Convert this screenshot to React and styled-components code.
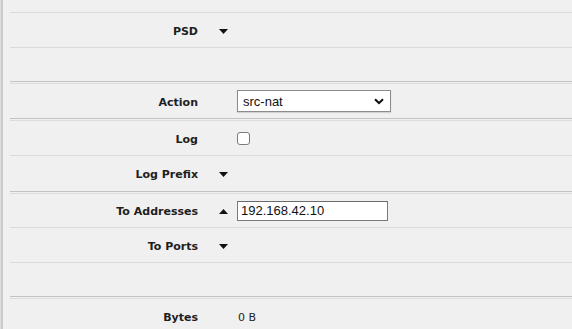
import React from "react";
import styled, { createGlobalStyle } from "styled-components";

// # Style # //
const GlobalStyle = createGlobalStyle`
  html, body {
    margin: 0;
    padding: 0;
    background: #f0f0f0;
    overflow: hidden;
  }
`;

const Page = styled.div`
  display: flex;
  width: 572px;
  height: 329px;
  overflow: hidden;
  background: #f0f0f0;
`;

const Rail = styled.div`
  flex: 0 0 3px;
  background: linear-gradient(to right, #dedede 0 1px, #cbcbcb 1px 3px);
`;

const Content = styled.div`
  flex: 1;
  padding-left: 7px;
  margin-top: -22px;
`;

const Section = styled.div`
  border-bottom: 1px solid #c3c3c3;

  & + & {
    margin-top: 1px;
    border-top: 1px solid #dcdcdc;
  }
`;

const Row = styled.div`
  display: grid;
  grid-template-columns: 188px 39px 1fr;
  align-items: center;
  height: ${p => p.h || 34}px;
  padding-top: 2px;
  box-sizing: border-box;
  font-family: "DejaVu Sans", Verdana, sans-serif;
  font-size: 11px;
  color: #222;

  &:not(:last-child) {
    border-bottom: 1px solid #dadada;
    height: ${p => (p.h || 34) + 1}px;
  }
`;

const Label = styled.div`
  text-align: right;
  font-weight: bold;
  color: ${p => (p.faint ? "#fafafa" : "#1e1e1e")};
`;

const Toggle = styled.div`
  padding-left: 21px;
  display: flex;
  align-items: center;
`;

const Value = styled.div`
  padding-left: 1px;
`;

const SelectBox = styled.div`
  position: relative;
  width: 154px;
  height: 22px;
  margin-top: -2px;
`;

const Select = styled.select`
  appearance: none;
  width: 100%;
  height: 100%;
  box-sizing: border-box;
  border: 1px solid #8c8c8c;
  border-radius: 0;
  background: #fff;
  box-shadow: 0 1px 1px rgba(0, 0, 0, 0.12);
  padding: 0 0 0 5px;
  font-family: "Liberation Sans", Arial, sans-serif;
  font-size: 13px;
  color: #111;
  outline: none;
`;

const Chevron = styled.svg`
  position: absolute;
  right: 7px;
  top: 8px;
  pointer-events: none;
`;

const TextInput = styled.input`
  width: 151px;
  height: 20px;
  box-sizing: border-box;
  border: 1px solid #7a7a7a;
  border-top-color: #6a6a6a;
  background: #fff;
  padding: 0 0 0 3px;
  margin-top: -2px;
  font-family: "Liberation Sans", Arial, sans-serif;
  font-size: 13px;
  color: #111;
  outline: none;
`;

const Check = styled.span`
  display: block;
  width: 13px;
  height: 13px;
  box-sizing: border-box;
  border: 1px solid #7b7b7b;
  border-radius: 3px;
  background: #fff;
  margin-top: -2px;
`;
// # End Style # //

const Arrow = ({ up }) => (
  <svg width="9" height="5" viewBox="0 0 9 5">
    {up ? (
      <polygon points="0,5 9,5 4.5,0" fill="#111" />
    ) : (
      <polygon points="0,0 9,0 4.5,5" fill="#111" />
    )}
  </svg>
);

const Field = ({ label, arrow, h, faint, children }) => (
  <Row h={h}>
    <Label faint={faint}>{label}</Label>
    <Toggle>{arrow && <Arrow up={arrow === "up"} />}</Toggle>
    <div>{children}</div>
  </Row>
);

const App = () => (
  <>
    <GlobalStyle />
    <Page>
      <Rail />
      <Content>
        <Section>
          <Field label="Chain" faint />
          <Field label="PSD" arrow="down" />
          <Row h={33} />
        </Section>
        <Section>
          <Field label="Action">
            <SelectBox>
              <Select defaultValue="src-nat">
                <option value="src-nat">src-nat</option>
                <option value="dst-nat">dst-nat</option>
                <option value="masquerade">masquerade</option>
              </Select>
              <Chevron width="10" height="7" viewBox="0 0 10 7">
                <path d="M1 1.2 L5 5 L9 1.2" fill="none" stroke="#111" strokeWidth="2" />
              </Chevron>
            </SelectBox>
          </Field>
        </Section>
        <Section>
          <Field label="Log">
            <Check />
          </Field>
          <Field label="Log Prefix" arrow="down" h={35} />
        </Section>
        <Section>
          <Field label="To Addresses" arrow="up" h={33}>
            <TextInput defaultValue="192.168.42.10" />
          </Field>
          <Field label="To Ports" arrow="down" />
          <Row h={33} />
        </Section>
        <Section>
          <Field label="Bytes">
            <Value>0 B</Value>
          </Field>
        </Section>
      </Content>
    </Page>
  </>
);

export default App;
